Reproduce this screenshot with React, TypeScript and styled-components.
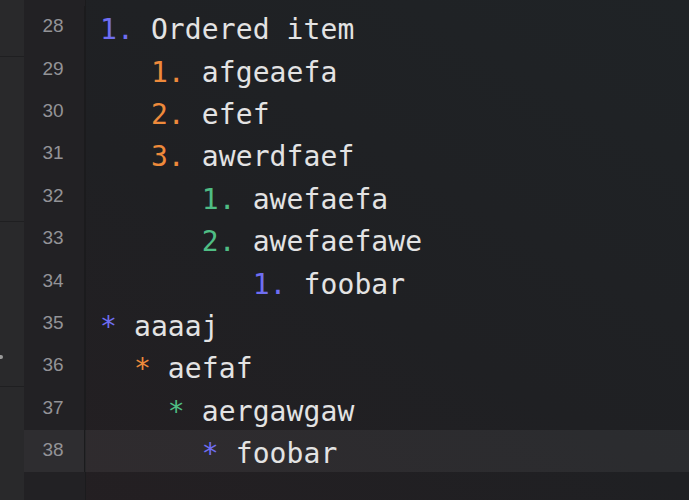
import React from "react";
import styled, { createGlobalStyle } from "styled-components";

const Global = createGlobalStyle`
  html, body { margin: 0; padding: 0; background: #1f2124; }
  body { width: 689px; height: 500px; overflow: hidden; }
`;

const Page = styled.div`
  display: flex;
  width: 689px;
  height: 500px;
  overflow: hidden;
`;

const Sidebar = styled.div`
  width: 24px;
  flex: none;
  display: flex;
  flex-direction: column;
  background: #29292b;
`;

const SideSection = styled.div<{ $h: number }>`
  height: ${(p) => p.$h}px;
  flex: none;
  border-bottom: 1px solid #1f1f21;
  position: relative;
`;

const Dot = styled.span`
  position: absolute;
  left: 0;
  top: 133px;
  width: 3px;
  height: 4px;
  background: #9a9a9a;
  border-radius: 0 2px 2px 0;
`;

const Editor = styled.div`
  flex: 1;
  display: flex;
  flex-direction: column;
  padding-top: 6px;
  background: linear-gradient(30deg, #241f22 0%, #1f2023 45%, #1f2326 100%);
  position: relative;
`;

const GutterBg = styled.div`
  position: absolute;
  left: 0;
  top: 0;
  bottom: 0;
  width: 61px;
  background: #222124;
  border-right: 1px solid #1b1b1d;
`;

const Line = styled.div<{ $active?: boolean }>`
  position: relative;
  display: flex;
  align-items: center;
  height: 42.4px;
  background: ${(p) => (p.$active ? "rgba(255,255,255,0.055)" : "transparent")};
`;

const LineNo = styled.div`
  width: 61px;
  flex: none;
  font-family: "Liberation Sans", Arial, sans-serif;
  font-size: 19px;
  color: #939397;
  border-right: 1px solid #1b1b1d;
  align-self: stretch;
  display: flex;
  align-items: center;
  justify-content: center;
  padding: 0 2px 2px 0;
  box-sizing: border-box;
`;

const Code = styled.div`
  padding-left: 15px;
  padding-top: 5px;
  font-family: "DejaVu Sans Mono", "Liberation Mono", monospace;
  font-size: 28px;
  color: #e3e3e3;
  white-space: pre;
  letter-spacing: 0.1px;
`;

const Marker = styled.span<{ $c: string }>`
  color: ${(p) => p.$c};
`;

const BLUE = "#6f6ef2";
const ORANGE = "#ee8a3b";
const GREEN = "#4fbd84";

type Row = { n: number; indent: number; marker: string; color: string; text: string };

const rows: Row[] = [
  { n: 28, indent: 0, marker: "1.", color: BLUE, text: "Ordered item" },
  { n: 29, indent: 3, marker: "1.", color: ORANGE, text: "afgeaefa" },
  { n: 30, indent: 3, marker: "2.", color: ORANGE, text: "efef" },
  { n: 31, indent: 3, marker: "3.", color: ORANGE, text: "awerdfaef" },
  { n: 32, indent: 6, marker: "1.", color: GREEN, text: "awefaefa" },
  { n: 33, indent: 6, marker: "2.", color: GREEN, text: "awefaefawe" },
  { n: 34, indent: 9, marker: "1.", color: BLUE, text: "foobar" },
  { n: 35, indent: 0, marker: "*", color: BLUE, text: "aaaaj" },
  { n: 36, indent: 2, marker: "*", color: ORANGE, text: "aefaf" },
  { n: 37, indent: 4, marker: "*", color: GREEN, text: "aergawgaw" },
  { n: 38, indent: 6, marker: "*", color: BLUE, text: "foobar" },
];

export default function App() {
  return (
    <Page>
      <Global />
      <Sidebar>
        <SideSection $h={56} />
        <SideSection $h={164} />
        <SideSection $h={164}>
          <Dot />
        </SideSection>
      </Sidebar>
      <Editor>
        <GutterBg />
        {rows.map((r) => (
          <Line key={r.n} $active={r.n === 38}>
            <LineNo>{r.n}</LineNo>
            <Code>
              {" ".repeat(r.indent)}
              <Marker $c={r.color}>{r.marker}</Marker> {r.text}
            </Code>
          </Line>
        ))}
      </Editor>
    </Page>
  );
}
